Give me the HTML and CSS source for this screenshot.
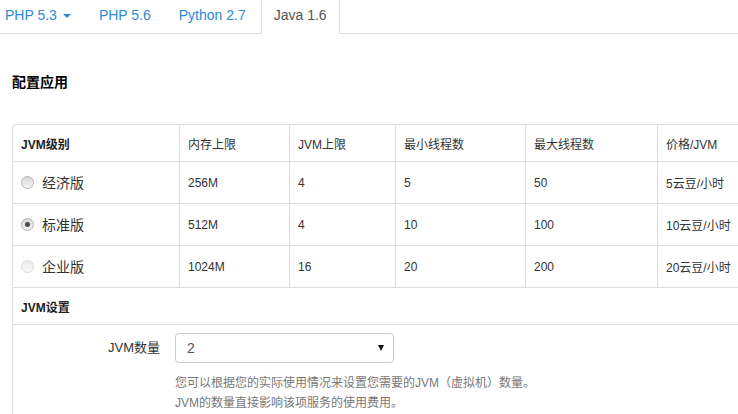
FILE: index.html
```html
<!DOCTYPE html>
<html lang="zh-CN">
<head>
<meta charset="utf-8">
<title>配置应用</title>
<link rel="stylesheet" href="styles.css">
</head>
<body>
<div class="page">
  <ul class="tabs">
    <li><a class="tab" href="#">PHP 5.3<span class="caret"></span></a></li>
    <li><a class="tab" href="#">PHP 5.6</a></li>
    <li><a class="tab" href="#">Python 2.7</a></li>
    <li><a class="tab active" href="#">Java 1.6</a></li>
  </ul>

  <h3 class="title">配置应用</h3>

  <div class="panel">
    <table class="grid">
      <colgroup>
        <col class="c1"><col class="c2"><col class="c3"><col class="c4"><col class="c5"><col class="c6">
      </colgroup>
      <thead>
        <tr>
          <th class="bold">JVM级别</th>
          <th>内存上限</th>
          <th>JVM上限</th>
          <th>最小线程数</th>
          <th>最大线程数</th>
          <th>价格/JVM</th>
        </tr>
      </thead>
      <tbody>
        <tr>
          <td><span class="opt"><span class="radio"></span><span class="opt-label">经济版</span></span></td>
          <td>256M</td><td>4</td><td>5</td><td>50</td><td>5云豆/小时</td>
        </tr>
        <tr>
          <td><span class="opt"><span class="radio checked"></span><span class="opt-label">标准版</span></span></td>
          <td>512M</td><td>4</td><td>10</td><td>100</td><td>10云豆/小时</td>
        </tr>
        <tr>
          <td><span class="opt"><span class="radio disabled"></span><span class="opt-label">企业版</span></span></td>
          <td>1024M</td><td>16</td><td>20</td><td>200</td><td>20云豆/小时</td>
        </tr>
        <tr class="section">
          <td colspan="6">JVM设置</td>
        </tr>
      </tbody>
    </table>

    <div class="form-row">
      <label class="form-label">JVM数量</label>
      <div class="field">
        <div class="select"><span>2</span><span class="arrow"></span></div>
        <p class="help">您可以根据您的实际使用情况来设置您需要的JVM（虚拟机）数量。<br>JVM的数量直接影响该项服务的使用费用。</p>
      </div>
    </div>
  </div>
</div>
</body>
</html>
```

FILE: styles.css
```css
html, body {
  margin: 0;
  padding: 0;
  overflow: hidden;
  background: #fff;
}

body {
  font-family: "Liberation Sans", "Noto Sans CJK SC", sans-serif;
  font-size: 12px;
  color: #333;
}

.page {
  padding-left: 12px;
  width: 900px;
}

/* tabs */
.tabs {
  list-style: none;
  margin: -4px 0 0 -20px;
  padding: 0;
  display: flex;
  border-bottom: 1px solid #ddd;
}

.tabs li {
  margin-bottom: -1px;
  margin-right: 2px;
}

.tab {
  display: block;
  padding: 8px 12px;
  line-height: 20px;
  font-size: 14px;
  color: #2b8ad6;
  text-decoration: none;
  border: 1px solid transparent;
  border-radius: 4px 4px 0 0;
}

.tab.active {
  color: #555;
  background: #fff;
  border-color: #ddd;
  border-bottom-color: #fff;
}

.caret {
  display: inline-block;
  width: 0;
  height: 0;
  margin-left: 6px;
  vertical-align: middle;
  border-top: 4px solid #2b8ad6;
  border-left: 4px solid transparent;
  border-right: 4px solid transparent;
}

/* heading */
.title {
  margin: 38px 0 0;
  font-size: 14px;
  line-height: 20px;
  font-weight: bold;
  color: #000;
}

/* panel */
.panel {
  margin-top: 32px;
  width: 780px;
  height: 320px;
  border: 1px solid #ddd;
  border-radius: 4px;
}

.grid {
  border-collapse: separate;
  border-spacing: 0;
  table-layout: fixed;
  width: 775px;
}

.c1 { width: 167px; }
.c2 { width: 110px; }
.c3 { width: 106px; }
.c4 { width: 130px; }
.c5 { width: 132px; }
.c6 { width: 130px; }

.grid th,
.grid td {
  box-sizing: border-box;
  padding: 0 8px;
  text-align: left;
  vertical-align: middle;
  font-size: 12px;
  font-weight: normal;
  color: #333;
  border-right: 1px solid #ddd;
  border-bottom: 1px solid #ddd;
  white-space: nowrap;
}

.grid th {
  height: 37px;
}

.grid th.bold {
  font-weight: bold;
  color: #222;
}

.grid td {
  height: 42px;
}

.grid .section td {
  height: 37px;
  font-weight: bold;
  color: #222;
  border-right: none;
}

.opt {
  display: flex;
  align-items: center;
}

.radio {
  box-sizing: border-box;
  width: 13px;
  height: 13px;
  border-radius: 50%;
  border: 1px solid #b4b4b4;
  background: linear-gradient(#d8d8d8, #f4f4f4);
  display: flex;
  align-items: center;
  justify-content: center;
  flex: none;
}

.radio.checked::after {
  content: "";
  width: 5px;
  height: 5px;
  border-radius: 50%;
  background: #4a4a4a;
}

.radio.disabled {
  border-color: #dcdcdc;
  background: linear-gradient(#ececec, #f8f8f8);
}

.opt-label {
  margin-left: 8px;
  font-size: 14px;
  line-height: 16px;
  color: #333;
}

/* form */
.form-row {
  display: flex;
  align-items: flex-start;
  padding-top: 8px;
}

.form-label {
  width: 147px;
  text-align: right;
  font-size: 13px;
  line-height: 30px;
  color: #333;
  flex: none;
}

.field {
  margin-left: 15px;
}

.select {
  box-sizing: border-box;
  width: 219px;
  height: 30px;
  border: 1px solid #ccc;
  border-radius: 4px;
  padding: 0 9px 0 11px;
  font-size: 14px;
  color: #555;
  display: flex;
  align-items: center;
  justify-content: space-between;
}

.arrow {
  width: 0;
  height: 0;
  border-top: 6px solid #111;
  border-left: 3px solid transparent;
  border-right: 3px solid transparent;
}

.help {
  margin: 10px 0 0;
  line-height: 20px;
  font-size: 12px;
  color: #777;
  white-space: nowrap;
}
```
